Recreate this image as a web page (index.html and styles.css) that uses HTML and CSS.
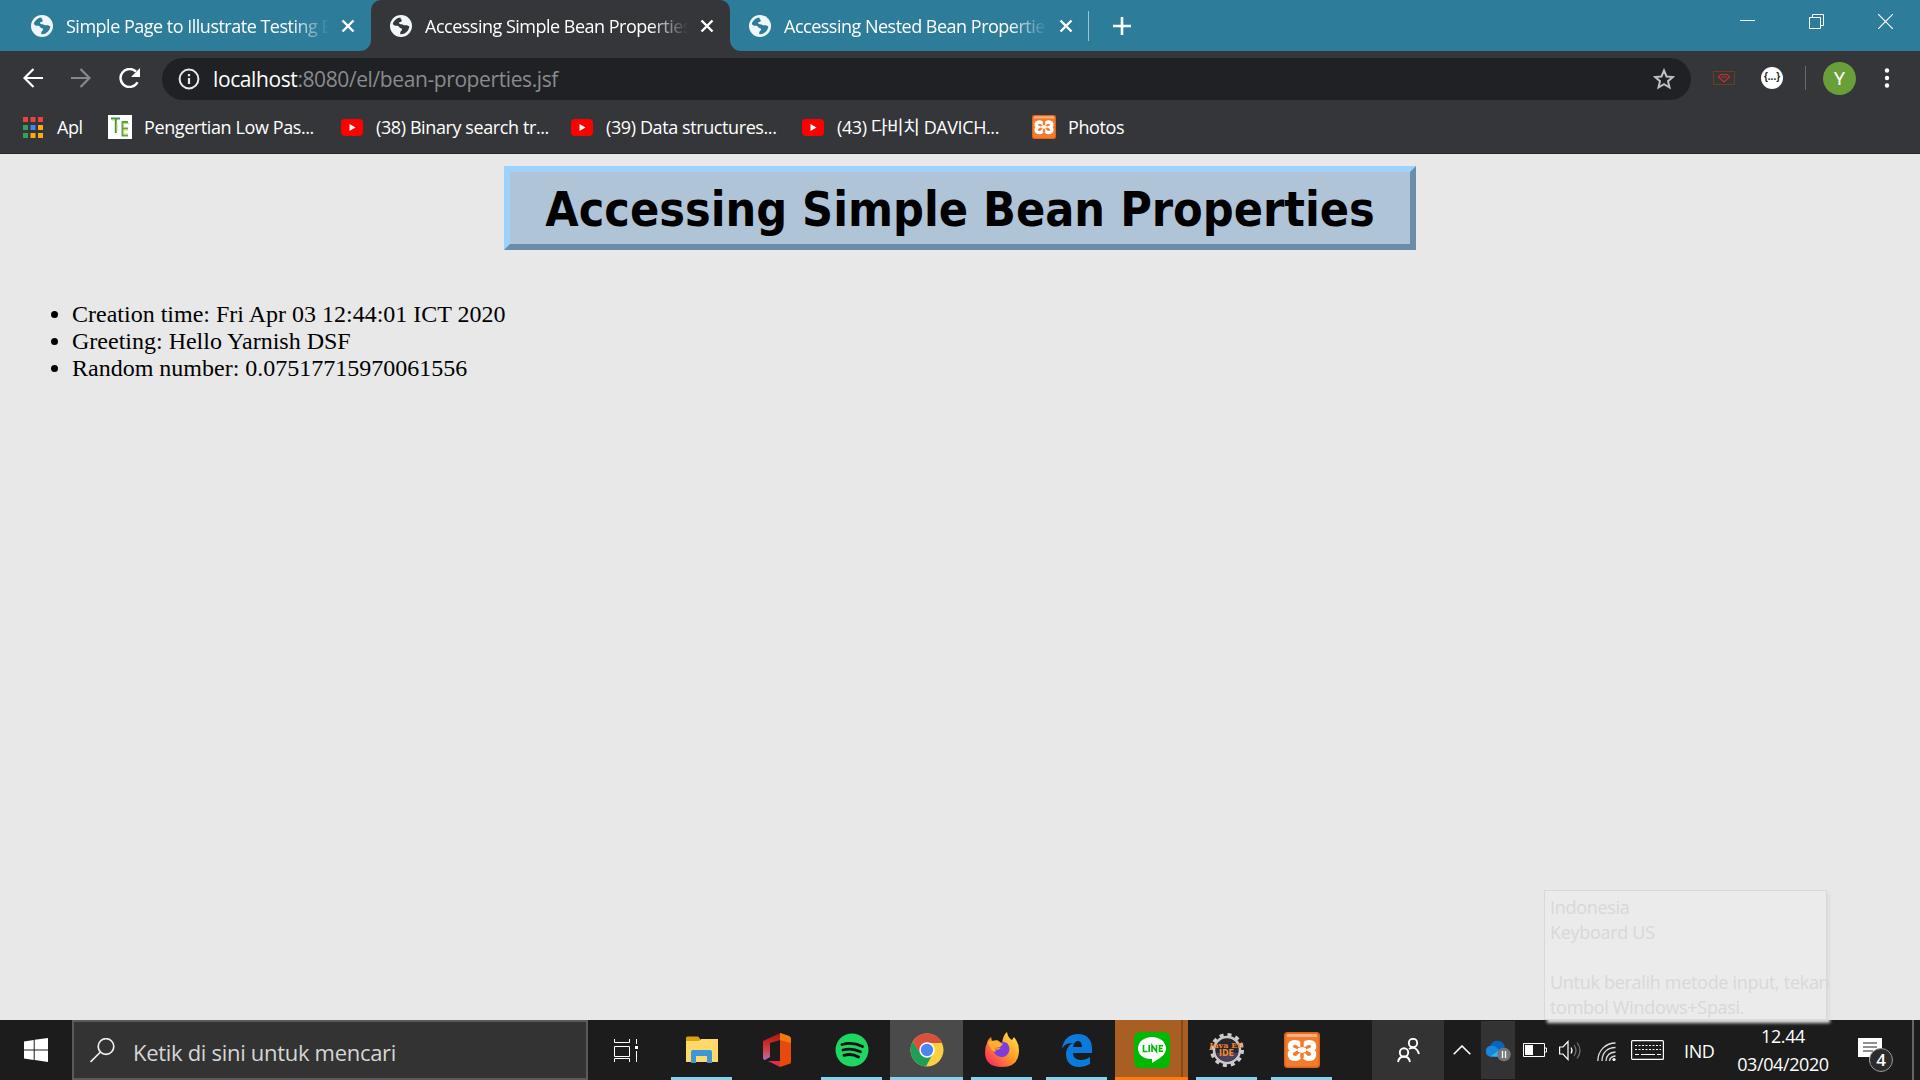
FILE: index.html
```html
<!DOCTYPE html>
<html lang="id">
<head>
<meta charset="utf-8">
<title>Accessing Simple Bean Properties</title>
<link rel="stylesheet" href="styles.css">
</head>
<body>
<svg class="defs" aria-hidden="true">
  <symbol id="globe" viewBox="0 0 22 22"><circle cx="11" cy="11" r="11" fill="#f1f6f8"/><path class="land" d="M10.5 2.6C7 2.8 3.7 5.500 2.800 9c1 1.600 3 2 4.800 1.800 1.600.2 1.500 2.200 3.200 2.400 1.500.3 1.700 1.300.8 2.200-1.300 1-1.700 2.400-1.200 3.900 2.700.2 5.300-1 7.100-3.200 1-1.500 1.700-3.100 1.800-4.900-1.500-.5-2.600-1.200-4.200-.9-1.500.2-2.300-1.300-4.200-1.100-1 .1-2.300-.7-1.700-1.700.5-1 2.200-.4 2.600-1.600.3-1.100-1.600-1.800-1.300-3.300z"/></symbol>
  <symbol id="cross" viewBox="0 0 14 14"><path d="M1.500 1.500l11 11M12.500 1.500l-11 11" stroke="#fff" stroke-width="2.400"/></symbol>
  <symbol id="yt" viewBox="0 0 22 17"><rect width="22" height="17" rx="4" fill="#f00"/><path d="M8.500 5l6 3.500-6 3.500z" fill="#fff"/></symbol>
  <symbol id="xampp" viewBox="0 0 36 36"><rect width="36" height="36" rx="3.500" fill="#d9651d"/><rect x="1.500" y="1.500" width="33" height="33" rx="3" fill="#f47b2c"/><path d="M3 2h30v3H3z" fill="#f8b083"/><path d="M11.500 10.500c-7 0-6 6-2.500 7.500-4 2-4 8.500 2.500 8.500 4.500 0 3.500-4 6.500-4s2 4 6.500 4c6.500 0 6.500-6.500 2.500-8.500 3.500-1.500 4.500-7.500-2.500-7.500-4 0-3.500 3-6.500 3s-2.500-3-6.500-3z" fill="#f47b2c" stroke="#fff" stroke-width="5"/><path d="M18 10v5M18 21v5" stroke="#f47b2c" stroke-width="3.500"/><path d="M14 18h8" stroke="#fff" stroke-width="4"/></symbol>
</svg>

<header class="tabstrip">
  <div class="tab tab-first"><svg class="globe"><use href="#globe"/></svg><span class="tab-title">Simple Page to Illustrate Testing B</span><svg class="cross"><use href="#cross"/></svg></div>
  <div class="tab tab-active"><svg class="globe"><use href="#globe"/></svg><span class="tab-title">Accessing Simple Bean Properties</span><svg class="cross"><use href="#cross"/></svg></div>
  <div class="tab tab-last"><svg class="globe"><use href="#globe"/></svg><span class="tab-title">Accessing Nested Bean Properties</span><svg class="cross"><use href="#cross"/></svg></div>
  <div class="strip-rest">
    <svg class="plus" viewBox="0 0 18 18"><path d="M9 0v18M0 9h18" stroke="#fff" stroke-width="2.600"/></svg>
    <div class="win-controls">
      <svg width="15" height="15" viewBox="0 0 15 15"><path d="M0 6.500h15" stroke="#fff"/></svg>
      <svg width="15" height="15" viewBox="0 0 15 15" fill="none" stroke="#fff"><path d="M.5 3.500h11v11H.5zM3.500 3V.5h11v11h-3"/></svg>
      <svg width="15" height="15" viewBox="0 0 15 15"><path d="M0 0l15 15M15 0L0 15" stroke="#fff" stroke-width="1.200"/></svg>
    </div>
  </div>
</header>

<nav class="toolbar">
  <svg class="nav-icon" viewBox="0 0 20 20" fill="none" stroke="#fff" stroke-width="2.200"><path d="M20 10H2M10.500 1L1.500 10l9 9"/></svg>
  <svg class="nav-icon" viewBox="0 0 20 20" fill="none" stroke="#87888a" stroke-width="2.200"><path d="M0 10h18M9.500 1l9 9-9 9"/></svg>
  <svg class="nav-icon reload" viewBox="0 0 22 20" fill="none"><path d="M18.500 14.200A9 9 0 1 1 17 3.700" stroke="#fff" stroke-width="2.400"/><path d="M21 0v9h-9z" fill="#fff"/></svg>
  <div class="omnibox">
    <svg class="info" viewBox="0 0 22 22"><circle cx="11" cy="11" r="9.400" fill="none" stroke="#e8eaed" stroke-width="2"/><path d="M11 10v6M11 6v2.200" stroke="#e8eaed" stroke-width="2.200"/></svg>
    <span class="url"><b>localhost</b>:8080/el/bean-properties.jsf</span>
    <svg class="star" viewBox="0 0 22 22"><path d="M11 2.500l2.500 6 6.300.5-4.800 4.200 1.500 6.300L11 16.200l-5.500 3.300L7 13.200 2.200 9l6.300-.5z" fill="none" stroke="#bdc1c6" stroke-width="2"/></svg>
  </div>
  <svg class="ext-mail" viewBox="0 0 22 14" fill="none"><rect x=".5" y=".5" width="21" height="13" stroke="#6b3f14"/><path d="M7.500 3.500h7l2 2.500-5.500 5L5.500 6zM8 6h6" stroke="#c5302a" stroke-width="1.200"/></svg>
  <span class="ext-json">{...}</span>
  <span class="divider"></span>
  <span class="avatar">Y</span>
  <svg class="menu" viewBox="0 0 6 20" fill="#fff"><circle cx="3" cy="2.500" r="2.200"/><circle cx="3" cy="10" r="2.200"/><circle cx="3" cy="17.500" r="2.200"/></svg>
</nav>

<nav class="bookmarks">
  <div class="bm bm-apps"><svg width="20" height="21" viewBox="0 0 20 21"><path d="M0 0h5v5H0zM7.500 0h5v5h-5zM15 0h5v5h-5z" fill="#e8453c"/><path d="M0 8h5v5H0zM0 16h5v5H0z" fill="#34a05a"/><path d="M7.500 8h5v5h-5z" fill="#4285f4"/><path d="M15 8h5v5h-5zM7.500 16h5v5h-5zM15 16h5v5h-5z" fill="#f9ab0f"/></svg><span>Apl</span></div>
  <div class="bm bm-te"><svg width="24" height="24" viewBox="0 0 24 24" fill="none"><path d="M0 0h24v24H0z" fill="#fff"/><path d="M3 3.500h9M7.800 3.500V18" stroke="#3a9a4a" stroke-width="2"/><path d="M20 7h-5.500v13.500H20M14.500 13.500H20" stroke="#58a845" stroke-width="2"/><path d="M4 5h3M9 8v8M16 8.500h5M16 15h4M16 19h4" stroke="#e2cf49"/></svg><span>Pengertian Low Pas...</span></div>
  <div class="bm bm-38"><svg class="yt"><use href="#yt"/></svg><span>(38) Binary search tr...</span></div>
  <div class="bm bm-39"><svg class="yt"><use href="#yt"/></svg><span>(39) Data structures...</span></div>
  <div class="bm bm-43"><svg class="yt"><use href="#yt"/></svg><span>(43) 다비치 DAVICH...</span></div>
  <div class="bm bm-photos"><svg width="24" height="24"><use href="#xampp"/></svg><span>Photos</span></div>
</nav>

<main class="page">
  <h1 class="title">Accessing Simple Bean Properties</h1>
  <ul class="props">
    <li>Creation time: Fri Apr 03 12:44:01 ICT 2020</li>
    <li>Greeting: Hello Yarnish DSF</li>
    <li>Random number: 0.07517715970061556</li>
  </ul>
  <div class="tooltip"><p class="t1">Indonesia</p><p class="t2">Keyboard US</p><p>&nbsp;</p><p class="t3">Untuk beralih metode input, tekan</p><p class="t4">tombol Windows+Spasi.</p></div>
</main>

<footer class="taskbar">
  <div class="start"><svg width="24" height="24" viewBox="0 0 24 24"><path d="M0 3.500L9.700 2v9.500H0zM10.700 1.800L24 0v11.500H10.700zM0 12.500h9.700V22L0 20.600zM10.700 12.500H24V24l-13.300-1.900z" fill="#fff"/></svg></div>
  <div class="search"><svg width="25" height="25" viewBox="0 0 25 25" fill="none" stroke="#eee" stroke-width="1.700"><circle cx="16" cy="8.500" r="7.800"/><path d="M10.500 14L.5 24"/></svg><span>Ketik di sini untuk mencari</span></div>
  <div class="apps">
    <div class="app view"><svg width="24" height="23" viewBox="0 0 24 23" fill="none" stroke="#fff"><path d="M.5 0v3.500h15V0M.5 7.500h15v10H.5zM.5 23v-3.500h15V23M22.500 0v5M22.500 12v11"/><path d="M21 7h3v3h-3z" fill="#fff" stroke="none"/></svg></div>
    <div class="app open"><svg width="32" height="28" viewBox="0 0 32 28"><path d="M0 2q0-1.500 1.500-1.500H12l2 2h0V6H0z" fill="#dda010"/><path d="M0 5h13l2-2h17v23H0z" fill="#ffd969"/><path d="M5 27V16q0-2 2-2h17q2 0 2 2v11h-5v-7H10v7z" fill="#3b97dc"/></svg></div>
    <div class="app"><svg width="28" height="34" viewBox="0 0 28 34"><defs><linearGradient id="of" x2="0" y2="1"><stop stop-color="#a8150c"/><stop offset=".6" stop-color="#d83b40"/><stop offset="1" stop-color="#b070c0"/></linearGradient></defs><path d="M0 8L17 0v7L7 10v14l-5 3q-2 0-2-3z" fill="url(#of)"/><path d="M5 28h12v6z" fill="#e42d4d"/><path d="M17 0l9 3q2 1 2 3v23q0 2-2 2l-9 3z" fill="#e64a0e"/><path d="M17 0l9 3q2 1 2 3v4l-11-3z" fill="#f4790a"/></svg></div>
    <div class="app open"><svg width="34" height="34" viewBox="0 0 34 34"><circle cx="17" cy="17" r="16.500" fill="#1ed760"/><path d="M7 11.500c7-2 14-1.300 20.500 2M8 17c6-1.700 12-1 17.500 1.800M9 22.300c5-1.400 10-.9 14.500 1.700" stroke="#111" stroke-width="2.800" fill="none" stroke-linecap="round"/></svg></div>
    <div class="app open current"><svg width="34" height="34" viewBox="0 0 34 34"><circle cx="17" cy="17" r="16.500" fill="#fcd03e"/><path d="M2.700 8.800A16.500 16.500 0 0 1 32 10H17l-7 11z" fill="#d9503f"/><path d="M2.700 8.800A16.500 16.500 0 0 0 16 33.500l7-13-12 1z" fill="#1d9f5a"/><circle cx="17" cy="17" r="7.700" fill="#fff"/><circle cx="17" cy="17" r="6.200" fill="#4a86f0"/></svg></div>
    <div class="app open"><svg width="34" height="36" viewBox="0 0 34 36"><defs><linearGradient id="fx" x1="1" y1="0" x2="0" y2="1"><stop stop-color="#fff14a"/><stop offset=".5" stop-color="#ff9426"/><stop offset="1" stop-color="#f5156c"/></linearGradient></defs><path d="M2 11q1-4 4-6l1 4 5-1 5 3q1-8 5-11 1 6 5 8l2-3q5 6 5 13 0 17-17 17Q0 35 0 20q0-5 2-9z" fill="url(#fx)"/><path d="M10 15c2-5 8-6 12-4q5 6 0 12-6 5-12-1l-2-4q5 1 8-2z" fill="#7b3ce0"/><path d="M3 10q6-3 13 1l2 1-3 3-6 1 2 4q-6-1-8-10" fill="#ffb02c"/></svg></div>
    <div class="app open"><svg width="32" height="33" viewBox="0 0 32 33"><path d="M1 15C2 5 9 0 17 0c10 0 14 7 14 14v5H12c.5 9 11 8 17 4v7C18 36 5 33 5 20c0-5 3-9 7-11-6 0-9 2-11 6zm11-2h9c0-8-8-8-9 0z" fill="#0a7bdc"/></svg></div>
    <div class="app line"><svg width="36" height="36" viewBox="0 0 36 36"><rect width="36" height="36" rx="6" fill="#00b900"/><path d="M18 5c8 0 14 5 14 11.500S26 26 18 31v-4C10 27.500 4 23 4 16.500S10 5 18 5z" fill="#fff"/><path d="M9.500 13v6.500h4M15.200 13v7M18 20v-6.500l4.500 6V13M29 13.700h-3.500v5.600H29M25.500 16.500h3" fill="none" stroke="#00b900" stroke-width="1.600"/></svg></div>
    <div class="app open java"><svg width="34" height="34" viewBox="0 0 34 34"><circle cx="17" cy="17" r="15" fill="none" stroke="#ccc" stroke-width="4" stroke-dasharray="3.930 3.930"/><circle cx="17" cy="17" r="13" fill="#2a2630" stroke="#c8c8c8" stroke-width="2.500"/><path d="M6 20h22q-3 8-11 8T6 20z" fill="#4b405d"/></svg><b class="java-top">Java EE</b><b class="java-sub">IDE</b></div>
    <div class="app open"><svg width="36" height="36"><use href="#xampp"/></svg></div>
  </div>
  <div class="people"><svg width="23" height="25" viewBox="0 0 23 25" fill="none" stroke="#fff" stroke-width="1.900"><circle cx="16" cy="5" r="4.200"/><path d="M12 11q7-4 10 5"/><circle cx="7" cy="14.500" r="4.200"/><path d="M1 24q1-5.500 6-5.500t6 5.500"/></svg></div>
  <div class="tray">
    <svg class="chev" width="18" height="10" viewBox="0 0 18 10"><path d="M.7 9.300L9 1l8.300 8.300" fill="none" stroke="#fff" stroke-width="1.600"/></svg>
    <div class="cloud"><svg width="25" height="23" viewBox="0 0 25 23"><path d="M5 17a5 5 0 0 1-1-10Q7 1 13 2q5 1 6 6l-7 9z" fill="#0866bd"/><path d="M4 7q5-1 8 3l5 4-6 4H5Q0 17 0 12.500 0 8 4 7z" fill="#1687d9"/><path d="M5 17l7-5 6 6z" fill="#35b6f2"/><circle cx="18" cy="15.500" r="6.800" fill="#777"/><path d="M16.500 12v7M19.500 12v7" stroke="#fff" stroke-width="1.300"/></svg></div>
    <svg class="batt" width="24" height="14" viewBox="0 0 24 14"><path d="M.5.500h21v13H.5zM21.500 5h2v4h-2" fill="none" stroke="#fff"/><path d="M2 2h8v10H2z" fill="#fff"/></svg>
    <svg class="vol" width="23" height="21" viewBox="0 0 23 21" fill="none" stroke="#fff" stroke-width="1.200"><path d="M.6 7H4l5-5.500v18L4 14H.6z"/><path d="M12 7.500q2 3 0 6"/><path d="M15 5q4 5.500 0 11M18 2.500q6 8 0 16" stroke="#777"/></svg>
    <svg class="wifi" width="20" height="20" viewBox="0 0 20 20" fill="none" stroke="#ddd" stroke-width="1.300"><path d="M.8 19C1 8 9 1 18.500 1M5 19C5 10 11 5.500 18.500 5.500M9 19q.5-8.500 9.500-9M12.500 19q.5-4.500 6-5"/><circle cx="17" cy="17.500" r="1.600" fill="#fff" stroke="none"/></svg>
    <svg class="kbd" width="33" height="20" viewBox="0 0 33 20" fill="none" stroke="#fff"><rect x=".6" y=".6" width="31.800" height="18.800" rx="1" stroke-width="1.200"/><path d="M4 5.500h26M4 9.500h26" stroke-dasharray="2 1.500"/><path d="M4 14.500h4M10 14.500h14M26 14.500h4"/></svg>
    <span class="lang">IND</span>
    <div class="clock"><span>12.44</span><span class="date">03/04/2020</span></div>
    <div class="notif"><svg width="24" height="25" viewBox="0 0 24 25"><path d="M0 0h24v19H16l-5 5.500V19H0z" fill="#fff"/><path d="M5 5h14M5 9h14M5 13h10" stroke="#222" stroke-width="1.200"/></svg><span class="badge">4</span></div>
    <span class="peek"></span>
  </div>
</footer>
</body>
</html>
```

FILE: styles.css
```css
* { box-sizing: border-box; }
body { margin: 0; width: 1920px; height: 1080px; overflow: hidden; display: flex; flex-direction: column; background: #e8e8e8; color: #fff; font-family: "Open Sans", "Noto Sans CJK KR", sans-serif; }
svg { display: block; flex: none; }
span, p { white-space: nowrap; }
.defs { display: none; }

.tabstrip { height: 51px; display: flex; background: linear-gradient(#2d7d9a 50%, #35363a 50%); }
.tab { display: flex; align-items: center; width: 359px; padding-left: 19px; }
.tab-first { width: 371px; padding-left: 31px; background: #2d7d9a; border-bottom-right-radius: 11px; }
.tab-active { background: #35363a; border-radius: 10px 10px 0 0; }
.tab-last { background: #2d7d9a; border-bottom-left-radius: 11px; position: relative; }
.tab-last::after { content: ""; position: absolute; right: 0; top: 11px; width: 1px; height: 30px; background: #9cc5d3; }
.globe { width: 22px; height: 22px; color: #2d7d9a; }
.globe { fill: #2d7d9a; }
.tab-active .globe { fill: #35363a; }
.tab-title { width: 264px; margin-left: 13px; overflow: hidden; font-size: 18px; line-height: 30px; letter-spacing: -0.5px; -webkit-mask-image: linear-gradient(90deg, #000 225px, transparent 263px); mask-image: linear-gradient(90deg, #000 225px, transparent 263px); }
.cross { width: 14px; height: 14px; margin-left: 11px; }
.strip-rest { flex: 1; display: flex; justify-content: space-between; align-items: center; padding: 0 27px 0 24px; background: #2d7d9a; }
.plus { width: 18px; height: 18px; }
.win-controls { display: flex; gap: 54px; margin-bottom: 8px; }

.toolbar { height: 50px; display: flex; align-items: center; padding: 4px 0 0 23px; background: #35363a; }
.nav-icon { width: 20px; height: 20px; margin-right: 28px; }
.reload { width: 22px; margin-right: 21px; }
.omnibox { width: 1529px; height: 42px; margin-top: 2px; border-radius: 21px; background: #202124; display: flex; align-items: center; padding: 0 16px; }
.info { width: 22px; height: 22px; }
.url { margin-left: 13px; font-size: 21px; letter-spacing: -0.4px; color: #898b8e; flex: 1; }
.url b { font-weight: 400; color: #fff; }
.star { width: 22px; height: 22px; }
.ext-mail { width: 22px; height: 14px; margin-left: 22px; }
.ext-json { width: 22px; height: 22px; margin-left: 26px; border-radius: 50%; background: #fff; color: #222; font: bold 10px/20px "Liberation Sans", sans-serif; text-align: center; }
.divider { width: 1px; height: 24px; margin-left: 22px; background: #6a6b6e; }
.avatar { width: 33px; height: 33px; margin-left: 17px; border-radius: 50%; background: #689f38; font: 19px/33px Roboto, sans-serif; text-align: center; }
.menu { width: 6px; height: 20px; margin-left: 28px; }

.bookmarks { height: 53px; display: flex; align-items: center; padding-left: 23px; background: #35363a; border-bottom: 1px solid #25262a; }
.bm { display: flex; align-items: center; gap: 13px; font-size: 18px; line-height: 26px; letter-spacing: -0.4px; }
.bm-apps { width: 85px; gap: 14px; }
.bm-te { width: 233px; gap: 12px; }
.bm-38, .bm-39, .bm-43 { width: 230px; }
.bm-39 { width: 231px; }
.bm-photos { gap: 12px; }
.yt { width: 22px; height: 17px; }

.page { flex: 1; min-height: 0; position: relative; color: #000; padding-top: 12px; }
.title { width: 912px; height: 84px; margin: 0 auto; border: 6px outset #9ed2fb; border-color: #9ed2fb #6a8daa #6a8daa #9ed2fb; border-style: solid; background: #b0c4d8; text-align: center; white-space: nowrap; font: bold 48px/74px "DejaVu Sans Condensed", "DejaVu Sans", sans-serif; font-stretch: condensed; }
.props { margin: 51px 0 0; padding-left: 72px; font: 24px/27px "Liberation Serif", serif; }
.tooltip { position: absolute; left: 1544px; bottom: 0; width: 283px; height: 130px; padding: 4px 0 0 5px; border: 1px solid #d9d9d9; background: #ebebeb; box-shadow: 3px 3px 3px #dedede; color: #d8d8d8; font-size: 18px; line-height: 25px; letter-spacing: -0.3px; }
.tooltip p { margin: 0; }

.taskbar { height: 60px; display: flex; background: #1c1c1c; }
.start { width: 72px; display: flex; align-items: center; justify-content: center; }
.search { width: 516px; border: 2px solid #5a5a5a; background: #333; display: flex; align-items: center; gap: 18px; padding-left: 16px; color: #d6d6d6; font-size: 22px; letter-spacing: -0.3px; }
.search svg { margin-top: 1px; }
.search span { margin-top: 3px; }
.apps { display: flex; gap: 2px; width: 784px; }
.app { width: 73px; display: flex; align-items: center; justify-content: center; position: relative; }
.view { width: 75px; padding-left: 0; }
.open::after { content: ""; position: absolute; left: 6px; right: 6px; bottom: 0; height: 3px; background: #82d3f0; }
.current { background: #4a4a4a; }
.current::after { left: 0; right: 0; }
.line { background: linear-gradient(90deg, #a95e24 66px, #844819 66px, #844819 68px, #a95e24 68px); border-bottom: 3px solid #ff7b0a; }
.line svg { margin-top: 3px; }
.java-top, .java-sub { position: absolute; left: 0; right: 0; text-align: center; color: #f08a2c; font: bold 8px/9px "DejaVu Serif", serif; top: 21px; }
.java-sub { top: 29px; font: bold 8px/9px "DejaVu Sans", sans-serif; }
.people { width: 72px; display: flex; align-items: center; justify-content: center; background: #333; }
.tray { flex: 1; display: flex; align-items: center; padding-left: 9px; font-size: 18px; }
.cloud { width: 34px; height: 58px; margin-left: 10px; background: #333; display: flex; align-items: center; padding-left: 5px; }
.batt { margin-left: 8px; }
.vol { margin-left: 12px; }
.wifi { margin-left: 15px; margin-top: 4px; }
.kbd { margin-left: 14px; }
.lang { width: 34px; margin-left: 20px; letter-spacing: -0.4px; margin-top: 2px; }
.clock { width: 94px; margin-left: 18px; display: flex; flex-direction: column; align-items: center; line-height: 28px; letter-spacing: -0.4px; }
.notif { position: relative; width: 24px; height: 25px; margin-left: 28px; }
.badge { position: absolute; left: 11px; top: 10px; width: 24px; height: 24px; border: 1px solid #999; border-radius: 50%; background: #2c2c2c; font-size: 17px; line-height: 22px; text-align: center; font-weight: 600; }
.peek { width: 2px; height: 60px; margin-left: 30px; background: #666; }
```
